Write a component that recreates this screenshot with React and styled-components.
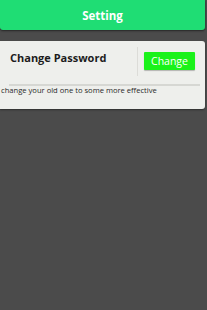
import React from "react";
import styled, { createGlobalStyle } from "styled-components";

const Global = createGlobalStyle`
  html, body {
    margin: 0;
    padding: 0;
    background: #4b4b4b;
    font-family: "Open Sans", "Liberation Sans", sans-serif;
  }
`;

const Page = styled.div`
  width: 207px;
  height: 310px;
  background: #4b4b4b;
  display: flex;
  flex-direction: column;
  padding-right: 2px;
  box-sizing: border-box;
`;

const Header = styled.div`
  height: 30px;
  background: #1fdd74;
  border-radius: 0 0 3px 3px;
  box-shadow: 0 1px 2px rgba(0, 0, 0, 0.5);
  display: flex;
  align-items: center;
  justify-content: center;
  color: #ffffff;
  font-weight: 700;
  font-size: 11.5px;
`;

const Card = styled.div`
  margin-top: 11px;
  height: 68px;
  background: #eeefec;
  border-radius: 0 3px 3px 0;
  box-shadow: 0 1px 2px rgba(0, 0, 0, 0.4);
  display: flex;
  flex-direction: column;
`;

const Row = styled.div`
  display: flex;
  align-items: center;
  height: 29px;
  margin-top: 6px;
`;

const Title = styled.div`
  flex: 1;
  padding-left: 10px;
  margin-top: -9px;
  font-size: 11px;
  font-weight: 700;
  color: #1c1c1c;
`;

const Divider = styled.div`
  width: 1px;
  align-self: stretch;
  background: #dcdcd8;
`;

const Button = styled.button`
  margin: -1px 10px 0 6px;
  width: 51px;
  height: 18px;
  padding: 0;
  border: none;
  border-radius: 1px;
  background: #1af21a;
  color: #ffffff;
  font-family: "Open Sans", "Liberation Sans", sans-serif;
  font-size: 10.5px;
  box-shadow: 0 1px 1px rgba(0, 0, 0, 0.25);
`;

const Rule = styled.div`
  height: 2px;
  margin: 8px 5px 0 9px;
  background: #d6d7d3;
`;

const Description = styled.div`
  padding-left: 1px;
  margin-top: 0;
  font-size: 7.6px;
  line-height: 8px;
  color: #2a2a2a;
  white-space: nowrap;
`;

const App = () => {
  return (
    <Page>
      <Global />
      <Header>Setting</Header>
      <Card>
        <Row>
          <Title>Change Password</Title>
          <Divider />
          <Button>Change</Button>
        </Row>
        <Rule />
        <Description>change your old one to some more effective</Description>
      </Card>
    </Page>
  );
};

export default App;
